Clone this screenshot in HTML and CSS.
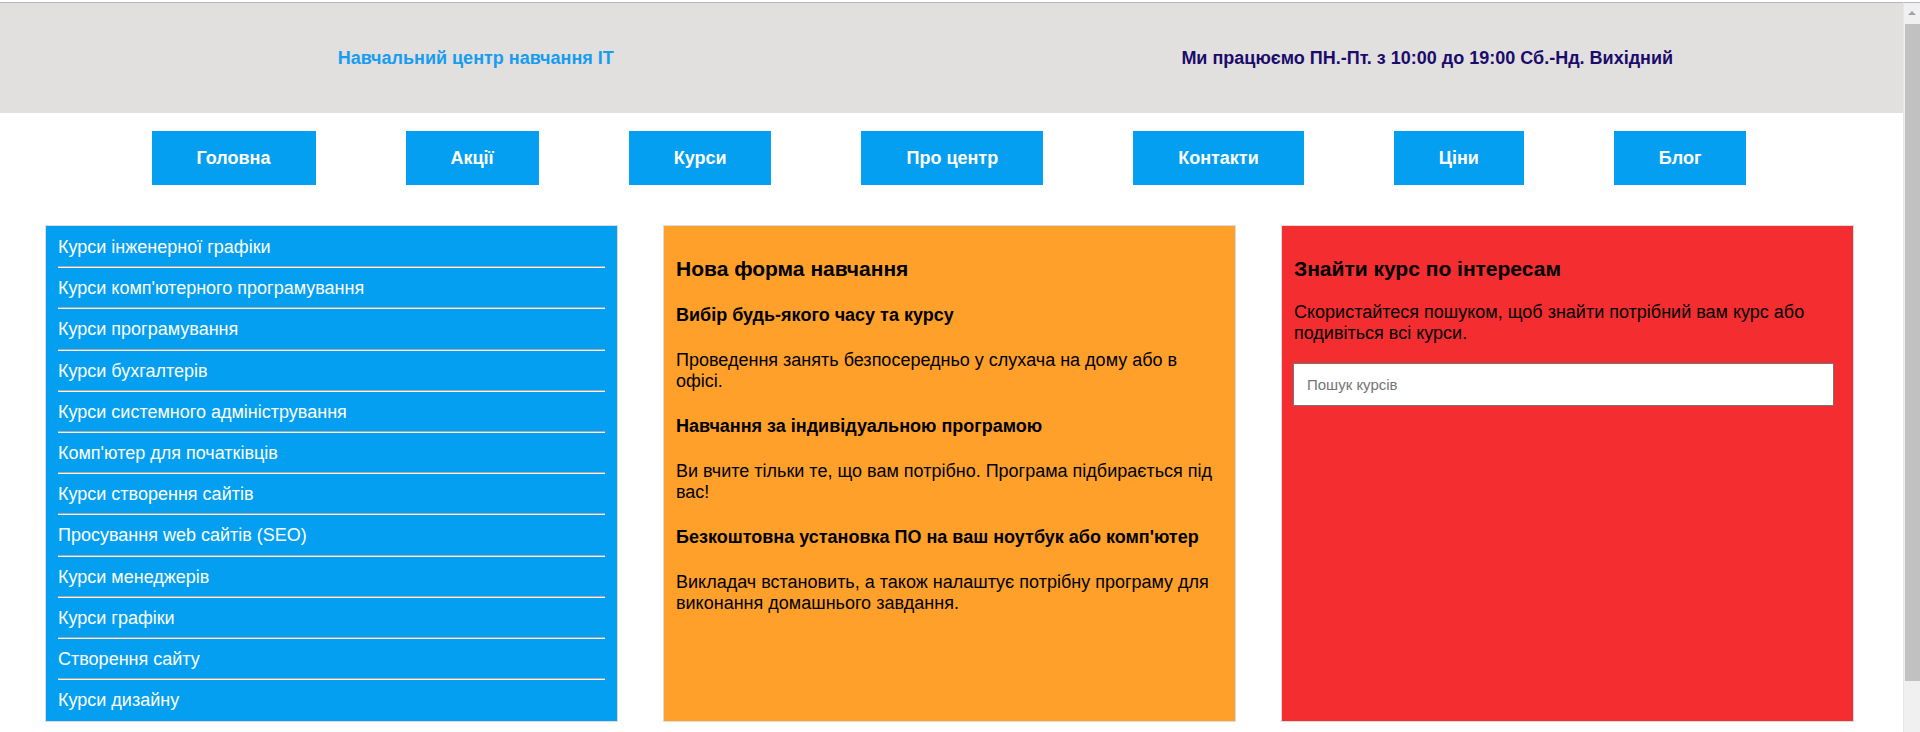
FILE: index.html
```html
<!DOCTYPE html>
<html lang="uk">
<head>
<meta charset="utf-8">
<title>Навчальний центр навчання IT</title>
<link rel="stylesheet" href="styles.css">
</head>
<body>
<header class="topbar">
  <div class="topbar-half"><span class="brand">Навчальний центр навчання IT</span></div>
  <div class="topbar-half"><span class="hours">Ми працюємо ПН.-Пт. з 10:00 до 19:00 Сб.-Нд. Вихідний</span></div>
</header>
<nav class="menu">
  <a class="menu-btn" href="#">Головна</a>
  <a class="menu-btn" href="#">Акції</a>
  <a class="menu-btn" href="#">Курси</a>
  <a class="menu-btn" href="#">Про центр</a>
  <a class="menu-btn" href="#">Контакти</a>
  <a class="menu-btn" href="#">Ціни</a>
  <a class="menu-btn" href="#">Блог</a>
</nav>
<main class="cols">
  <section class="col col-blue">
    <ul class="course-list">
      <li><a href="#">Курси інженерної графіки</a></li>
      <li><a href="#">Курси комп'ютерного програмування</a></li>
      <li><a href="#">Курси програмування</a></li>
      <li><a href="#">Курси бухгалтерів</a></li>
      <li><a href="#">Курси системного адміністрування</a></li>
      <li><a href="#">Комп'ютер для початківців</a></li>
      <li><a href="#">Курси створення сайтів</a></li>
      <li><a href="#">Просування web сайтів (SEO)</a></li>
      <li><a href="#">Курси менеджерів</a></li>
      <li><a href="#">Курси графіки</a></li>
      <li><a href="#">Створення сайту</a></li>
      <li><a href="#">Курси дизайну</a></li>
    </ul>
  </section>
  <section class="col col-orange">
    <h3 class="col-title">Нова форма навчання</h3>
    <h4 class="feature-title">Вибір будь-якого часу та курсу</h4>
    <p class="col-text">Проведення занять безпосередньо у слухача на дому або в офісі.</p>
    <h4 class="feature-title">Навчання за індивідуальною програмою</h4>
    <p class="col-text">Ви вчите тільки те, що вам потрібно. Програма підбирається під вас!</p>
    <h4 class="feature-title">Безкоштовна установка ПО на ваш ноутбук або комп'ютер</h4>
    <p class="col-text">Викладач встановить, а також налаштує потрібну програму для виконання домашнього завдання.</p>
  </section>
  <section class="col col-red">
    <h3 class="col-title">Знайти курс по інтересам</h3>
    <p class="col-text">Скористайтеся пошуком, щоб знайти потрібний вам курс або подивіться всі курси.</p>
    <form class="search-form">
      <input class="search-input" type="text" placeholder="Пошук курсів">
    </form>
  </section>
</main>
<div class="scrollbar" aria-hidden="true">
  <div class="scroll-btn"><span class="scroll-arrow"></span></div>
  <div class="scroll-thumb"></div>
</div>
</body>
</html>
```

FILE: styles.css
```css
html {
  margin: 0;
  padding: 0;
}

body {
  margin: 0 17px 0 0;
  padding-top: 2px;
  font-family: "Liberation Sans", Arial, sans-serif;
  font-size: 18px;
  color: #000;
  background: #fff;
}

.topbar {
  display: flex;
  height: 110px;
  background: #e2dfdf;
  border-top: 1px solid #b7b7bf;
}

.topbar-half {
  flex: 1;
  display: flex;
  align-items: center;
  justify-content: center;
  font-weight: bold;
  font-size: 18px;
}

.brand {
  color: #169cf0;
}

.hours {
  color: #1a0c6b;
}

.menu {
  display: flex;
  justify-content: center;
  gap: 90px;
  margin-top: 18px;
  padding-right: 5px;
}

.menu-btn {
  display: block;
  padding: 17px 45px;
  line-height: 20px;
  background: #049ff1;
  color: #fff;
  font-weight: bold;
  font-size: 18px;
  text-decoration: none;
}

.cols {
  display: grid;
  grid-template-columns: repeat(3, 573px);
  gap: 45px;
  padding-left: 45px;
  margin-top: 40px;
  margin-bottom: 56px;
}

.col {
  border: 1px solid #dcdcdc;
  padding: 10px 12px;
}

.col-blue {
  background: #049ff1;
  padding: 1px 12px 1px;
}

.col-orange {
  background: #fea029;
}

.col-red {
  background: #f32d30;
}

.course-list {
  list-style: none;
  margin: 0;
  padding: 0;
}

.course-list li {
  padding: 10px 0 9px;
  line-height: 21.2px;
  border-bottom: 1px solid #f4f4f4;
  box-shadow: inset 0 -1px 0 #a9a9a9;
}

.course-list li:last-child {
  border-bottom: none;
  box-shadow: none;
}

.course-list a {
  color: #fff;
  text-decoration: none;
}

.col-title {
  font-size: 21px;
  margin: 21px 0;
}

.feature-title {
  font-size: 18px;
  margin: 24px 0;
}

.col-text {
  margin: 18px 0;
}

.search-form {
  margin: 0;
  padding-top: 1px;
}

.search-input {
  display: block;
  box-sizing: border-box;
  width: 541px;
  height: 43px;
  margin-left: -1px;
  padding: 0 13px;
  border: 1px solid #767676;
  font-family: "Liberation Sans", Arial, sans-serif;
  font-size: 15px;
  background: #fff;
}

.search-input::placeholder {
  color: #757575;
}

/* window scrollbar, drawn over the right edge */
.scrollbar {
  position: fixed;
  top: 2px;
  right: 0;
  bottom: 0;
  width: 17px;
  box-sizing: border-box;
  border-top: 1px solid #b7b7bf;
  border-left: 1px solid #e6e6e6;
  background: #f0f0f0;
  display: flex;
  flex-direction: column;
}

.scroll-btn {
  height: 20px;
  display: flex;
  align-items: center;
  justify-content: center;
}

.scroll-arrow {
  width: 0;
  height: 0;
  border-left: 4px solid transparent;
  border-right: 4px solid transparent;
  border-bottom: 4px solid #a3a3a3;
}

.scroll-thumb {
  margin: 1px 0 0 1px;
  height: 657px;
  background: #c1c1c1;
}
```
